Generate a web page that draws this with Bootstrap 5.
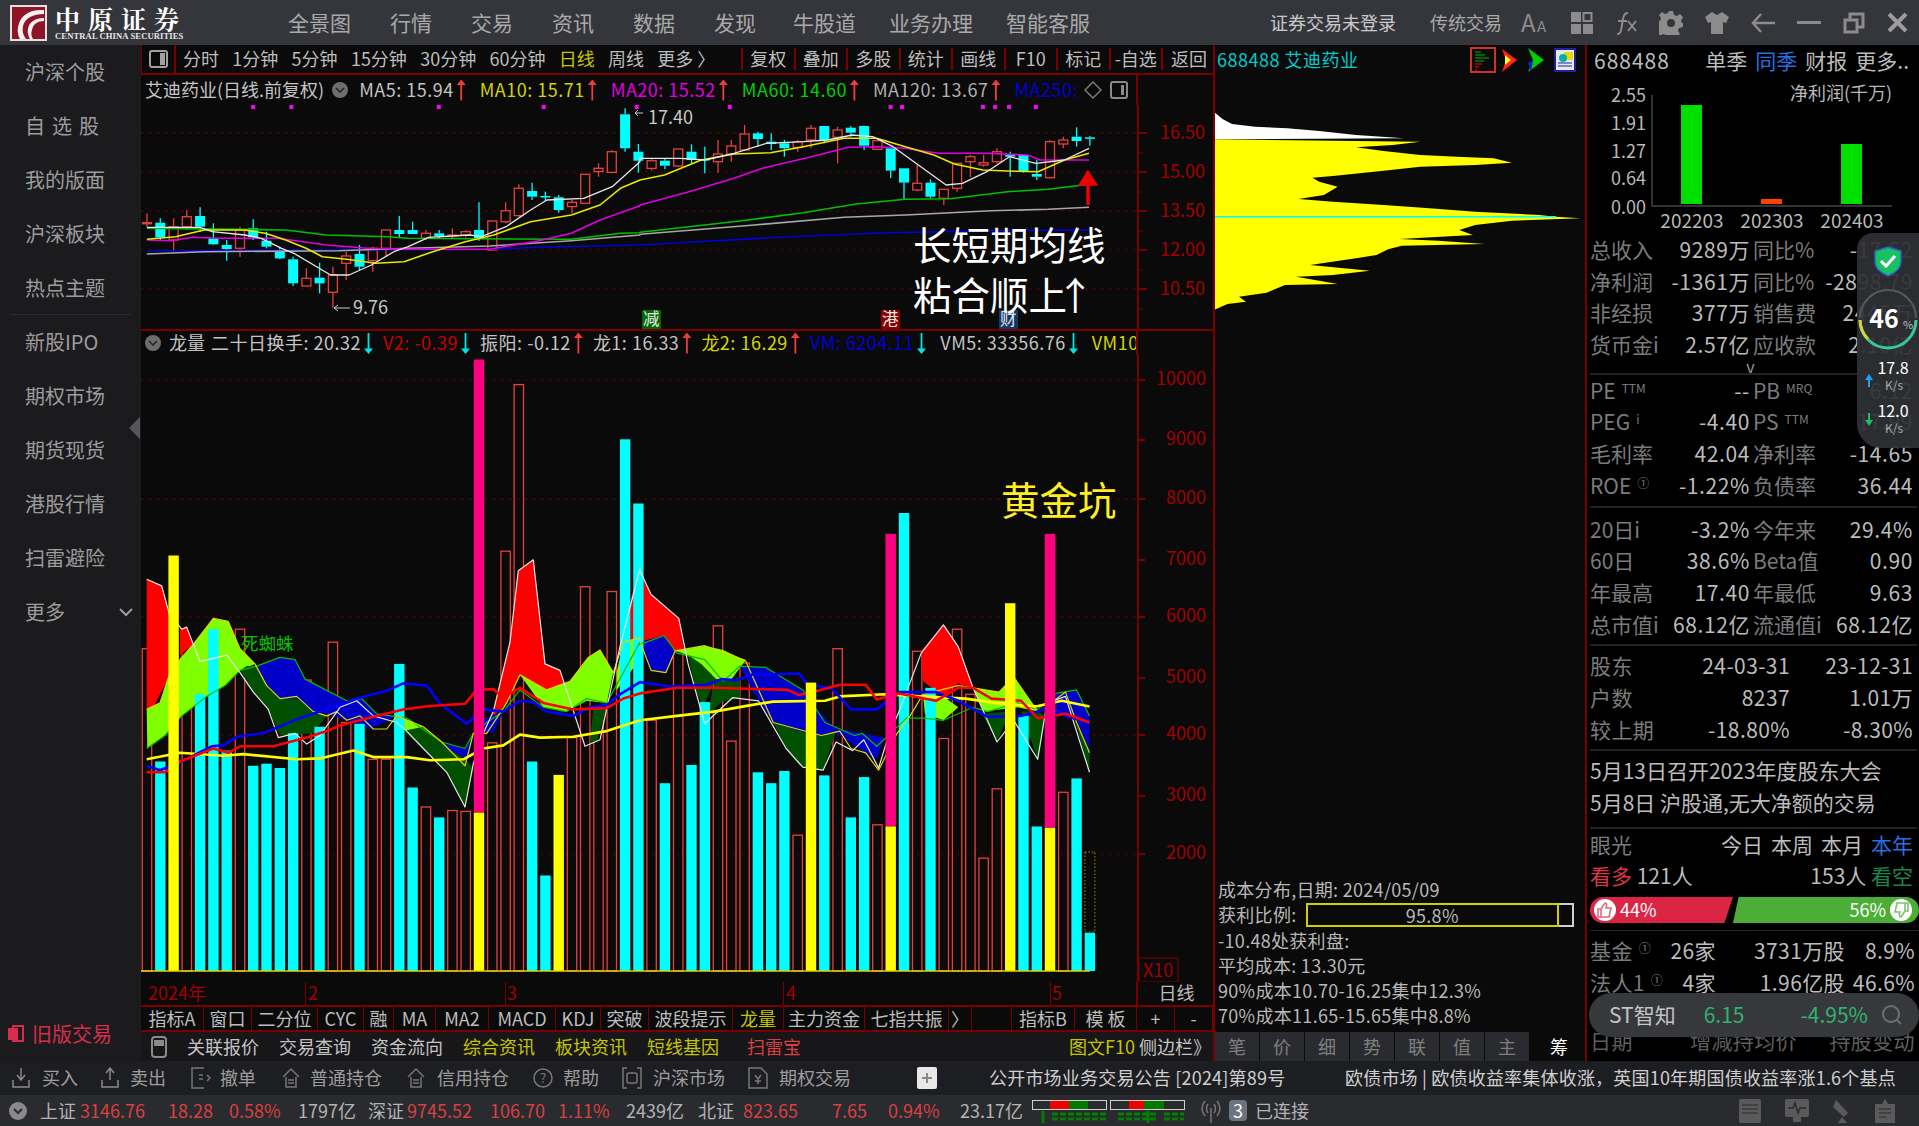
<!DOCTYPE html>
<html lang="zh-CN">
<head>
<meta charset="utf-8">
<title>中原证券</title>
<link href="https://cdn.jsdelivr.net/npm/bootstrap@5.3.0/dist/css/bootstrap.min.css" rel="stylesheet">
<style>
html,body{margin:0;height:100%;background:#000}
body{width:1919px;height:1126px;overflow:hidden;position:relative;font-family:"Noto Sans CJK SC","Liberation Sans",sans-serif;font-size:18px;color:#bdbdbd;line-height:1.2}
svg text{font-family:"Noto Sans CJK SC","Liberation Sans",sans-serif}
.tp-bar{height:45px;background:#35363b;color:#a9a9a9;white-space:nowrap;flex:none}
.tp-logo{width:288px;padding-left:10px}
.logo-cn{font-size:25px;font-weight:700;color:#fff;letter-spacing:8px;line-height:28px;white-space:nowrap;font-family:"Noto Serif CJK SC","Noto Sans CJK SC",serif}
.logo-en{font:700 8.6px/9px "Liberation Serif",serif;color:#e8e8e8;white-space:nowrap;letter-spacing:.1px}
.tp-menu{font-size:21px;gap:39px;flex:none}
.tp-menu2{font-size:21px;gap:33px;margin-left:37px;flex:none}
.tp-right{font-size:18px;gap:34px;padding-right:11px;flex:none}
.tp-icons{gap:22px;margin-left:-15px}
.mid-wrap{height:1016px;flex:none}
.side-col{width:141px;background:#1b1b1e;color:#9c9c9c;font-size:20px;position:relative;flex:none}
.side-it{height:54px;padding-left:25px;display:flex;align-items:center;white-space:nowrap}
.side-sp{letter-spacing:7px}
.side-sep{height:1px;background:#2c2c30;margin:-1px 10px 0}
.side-tri{position:absolute;left:129px;top:372px;width:0;height:0;border-top:11px solid transparent;border-bottom:11px solid transparent;border-right:11px solid #55565a}
.side-old{margin-top:auto;padding:0 0 15px 8px;color:#d92c4c;font-size:20px;white-space:nowrap}
.chart-col{width:1074px;background:#0a0a0a;flex:none}
.ln-b{border-bottom:2px solid #7a0000}
.ln-r{border-right:2px solid #7a0000}
.tool-row{height:30px;color:#bdbdbd}
.tool-ic{width:35px;flex:none;border-right:2px solid #7a0000;border-left:1px solid #7a0000}
.tool-grp{width:565px;flex:none;padding-left:7px;gap:13.300px;white-space:nowrap}
.tool-cell{width:52.500px;flex:none;text-align:center;border-left:2px solid #7a0000;white-space:nowrap}
.tool-cell:last-child{flex:1 1 auto}
.yel{color:#c4c400}
.lg-row{height:30px;flex:none}
.lg-vol{height:25px;border-top:1px solid #7a0000}
.lg-main{width:997px;flex:none;overflow:hidden;white-space:nowrap;padding-left:4px}
.lg-rest{flex:1 1 auto}
.lg-down{width:16px;height:16px;border-radius:50%;background:#6d6d6d;flex:none;display:flex;align-items:center;justify-content:center}
.aup,.adn{display:inline-block;width:9px;height:21px;flex:none;clip-path:polygon(50% 0,100% 26%,60% 26%,60% 100%,40% 100%,40% 26%,0 26%)}
.aup{background:#f03c3c}
.adn{background:#00e5e5;transform:rotate(180deg)}
.lg-it{display:flex;align-items:center;gap:3px;letter-spacing:.5px}
.lg-top{margin-left:14px}
.lg-first{margin-left:11px}
.lg-sec{margin-left:10px}
.lg-name{margin:0 6px 0 8px}
.c-w{color:#c4c4c4}.c-y{color:#d4d400}.c-m{color:#e000e0}.c-g{color:#00d000}.c-gr{color:#b0b0b0}.c-b{color:#0000d8}.c-r{color:#c80000}
.cv{display:block;flex:none}
.dt-row{height:25px;color:#a00000;font-size:18px}
.dt-main{width:997px;flex:none}
.dt-a{width:164px;padding-left:7px;flex:none}
.dt-b{width:200px;padding-left:2px;flex:none;border-left:1px solid #7a0000}
.dt-c{width:278px;padding-left:1px;flex:none;border-left:1px solid #7a0000}
.dt-d{width:267px;padding-left:2px;flex:none;border-left:1px solid #7a0000}
.dt-e{flex:1 1 auto;padding-left:1px;border-left:1px solid #7a0000}
.dt-f{flex:1 1 auto;text-align:center;color:#bdbdbd}
.tab-row{height:25px}
.tab-c{border-right:1px solid #7a0000;text-align:center;flex:none;white-space:nowrap;height:100%;line-height:23px}
.info-row{height:29px;background:#17171a;white-space:nowrap}
.info-l{padding-left:10px;gap:20px}
.chip-col{width:370px;flex:none;background:#0a0a0a;box-shadow:-2px 0 0 #7a0000}
.chip-head{height:30px;color:#00cccc;padding-left:2px;white-space:nowrap;letter-spacing:.5px}
.chip-ics{margin-left:auto;padding-right:9px;gap:5px}
.cost-box{height:157px;padding:2px 0 0 3px;line-height:25.300px;color:#b8b8b8;white-space:nowrap;letter-spacing:.3px}
.cost-bar{width:268px;height:24px;border:2px solid #cfcfcf;display:flex;margin-left:9px}
.cost-fill{width:96%;border:2px solid #d0d000;margin:-2px 0 -2px -2px;text-align:center;line-height:20px;font-size:18px}
.ch-tabs{height:29px;gap:1px;background:#0a0a0a;color:#7f7f7f}
.ch-t{width:44px;background:#2a2b2f;text-align:center;line-height:29px;flex:none}
.ch-on{background:#0a0a0a;color:#fff;margin-left:7px}
.fin-col{flex:1 1 auto;background:#000;border-left:2px solid #7a0000;overflow:hidden;font-size:21px;color:#bcbcbc;padding-left:3px}
.fin-head{height:31px;padding:0 10px 0 4px;white-space:nowrap;gap:8px}
.fin-head .tb-ms{margin-left:auto}
.fin-code{letter-spacing:1px}
.blu{color:#2a6fe0}
.fin-r{height:31.700px;display:flex;gap:3px;line-height:31px;white-space:nowrap;padding-right:6px}
.fin-h{width:160px;display:flex;justify-content:space-between;flex:none}
.fin-h>span:last-child{letter-spacing:.6px}
.lb{color:#7b7b7b}
.sup{font-size:12px;line-height:0;vertical-align:6px;margin-left:6px;color:#7b7b7b}
.fin-g{border-bottom:2px solid #222;margin-right:2px}
.g-a{padding-top:6px}
.fin-v{height:12px;line-height:10px;text-align:center;color:#999;font-size:16px;padding-right:5px;width:326px}
.fin-3{display:grid;height:31.700px;line-height:31px;white-space:nowrap;padding-right:3px;letter-spacing:.4px}
.fin-gap{height:27px}
.g3a{grid-template-columns:80px 120px 123px}
.g3b{grid-template-columns:72px 54px 129px 70px}
.g3c{grid-template-columns:100px 100px 125px}
.g3a>:nth-child(n+2),.g3b>:nth-child(n+2),.g3c>:nth-child(n+2){text-align:right}
.dim{color:#5e5e5e}
.eye-box{padding-top:0}
.bb-wrap{height:26px;margin:5px 0 7px;gap:0}
.bb-red{width:143px;height:26px;background:#dc2444;clip-path:polygon(0 0,100% 0,94% 100%,0 100%);border-radius:13px 0 0 13px;flex:none;color:#fff;font-size:18px;padding-left:4px}
.bb-grn{flex:1 1 auto;height:26px;background:#4cae36;clip-path:polygon(3% 0,100% 0,100% 100%,0 100%);border-radius:0 13px 13px 0;color:#fff;font-size:18px;padding-right:7px}
.bb-ball{width:22px;height:22px;background:#fff;border-radius:50%;flex:none;display:flex;align-items:center;justify-content:center}
.tb-bar{height:34px;background:#1d1e22;color:#9d9d9d;white-space:nowrap;flex:none;display:grid;align-items:center;padding-left:12px;grid-template-columns:30px 59px 29px 61px 29px 62px 28px 97px 30px 96px 30px 59px 31px 95px 31px 138px 72px 356px 1fr}
.tb-news{color:#cfcfcf;letter-spacing:.2px}
.st-bar{height:31px;background:#2a2b2f;white-space:nowrap;color:#b4b4b4;flex:none;display:grid;align-items:center;grid-template-columns:40px 40px 88px 61px 69px 70px 39px 83px 68px 68px 72px 45px 89px 56px 72px 72px 1fr}
.rd{color:#d94040}
.widget{position:absolute;left:1857px;top:233px;width:62px;height:215px;background:rgba(46,48,53,.93);border-radius:16px 0 0 24px;color:#fff;text-align:center;font-size:16px;line-height:18px}
.st-pill{position:absolute;left:1589px;top:993px;width:330px;height:44px;background:#36383c;border-radius:22px;color:#c4c4c4;white-space:nowrap;font-size:21px}
.st-g{color:#2fb36e}
</style>
</head>
<body class="d-flex flex-column">

<div class="tp-bar d-flex align-items-center">
  <div class="tp-logo d-flex align-items-center flex-shrink-0">
    <svg width="37" height="36" viewBox="0 0 37 36"><rect width="37" height="36" fill="#e8e0e0"/><rect x="2" y="2" width="33" height="32" fill="#8e1428"/><path d="M34 5C20 4 10 10 8 22c-1 6 1 10 2 12h6c-3-4-4-8-3-13C15 13 23 9 34 9z" fill="#f4f0f0"/><path d="M34 13c-9 0-15 4-16 11-1 4 1 8 2 10h3c-2-3-2-6-1-9 1-6 6-9 12-9z" fill="#f4f0f0"/></svg>
    <div class="ms-2"><div class="logo-cn">中原证券</div><div class="logo-en">CENTRAL CHINA SECURITIES</div></div>
  </div>
  <div class="tp-menu d-flex"><span>全景图</span><span>行情</span><span>交易</span><span>资讯</span><span>数据</span><span>发现</span></div>
  <div class="tp-menu2 d-flex"><span>牛股道</span><span>业务办理</span><span>智能客服</span></div>
  <div class="tp-right ms-auto d-flex align-items-center">
    <span class="text-light opacity-75">证券交易未登录</span><span>传统交易</span>
    <div class="tp-icons d-flex align-items-center" id="tpIcons">
      <svg width="28" height="22" viewBox="0 0 28 22" fill="#8c8c8c"><text x="0" y="20" font-size="24">A</text><text x="16" y="20" font-size="15">A</text></svg>
      <svg width="22" height="22" viewBox="0 0 22 22" fill="#8c8c8c"><rect width="10" height="10"/><rect x="12.500" y="1" width="8" height="8" fill="none" stroke="#8c8c8c" stroke-width="2"/><rect y="12" width="10" height="10"/><rect x="12" y="12" width="10" height="10"/></svg>
      <svg width="22" height="24" viewBox="0 0 22 24" fill="none" stroke="#8c8c8c" stroke-width="2"><path d="M2 23c4 0 4-3 5-9s1-12 6-12"/><path d="M3 10h9M13 10l8 10M21 10l-8 10"/></svg>
      <svg width="24" height="24" viewBox="0 0 24 24" fill="#8c8c8c"><path d="M10 0h4l1 4 3 1 3-2 3 3-2 4 1 2 1 0v4l-4 1-1 3 2 3-3 3-3-2-2 1-1 3h-4l-1-4-3-1-3 2-3-3 2-3-1-3-2-1v-4l4-1 1-3-2-3 3-3 3 2 3-1z"/><circle cx="12" cy="12" r="4" fill="#35363b"/></svg>
      <svg width="24" height="22" viewBox="0 0 24 22" fill="#8c8c8c"><path d="M7 0l5 3 5-3 7 5-3 6-3-1v12H6V10l-3 1-3-6z"/></svg>
      <svg width="24" height="20" viewBox="0 0 24 20" fill="none" stroke="#8c8c8c" stroke-width="2.500"><path d="M10 1L2 10l8 9M2 10h22"/></svg>
      <svg width="24" height="4" viewBox="0 0 24 4" fill="#8c8c8c"><rect width="24" height="3"/></svg>
      <svg width="22" height="22" viewBox="0 0 22 22" fill="none" stroke="#8c8c8c" stroke-width="3"><rect x="7" y="2" width="13" height="13"/><rect x="2" y="8" width="12" height="12" fill="#35363b"/></svg>
      <svg width="21" height="21" viewBox="0 0 21 21" stroke="#9c9c9c" stroke-width="4"><path d="M2 2l17 17M19 2L2 19"/></svg>
    </div>
  </div>
</div>

<div class="mid-wrap d-flex">
  <aside class="side-col d-flex flex-column">
    <div class="side-it">沪深个股</div><div class="side-it side-sp">自选股</div><div class="side-it">我的版面</div><div class="side-it">沪深板块</div><div class="side-it">热点主题</div>
    <div class="side-sep"></div>
    <div class="side-it">新股IPO</div><div class="side-it">期权市场</div><div class="side-it">期货现货</div><div class="side-it">港股行情</div><div class="side-it">扫雷避险</div>
    <div class="side-it">更多<svg class="ms-auto me-2" width="14" height="9" viewBox="0 0 14 9" fill="none" stroke="#9c9c9c" stroke-width="2"><path d="M1 1l6 6 6-6"/></svg></div>
    <div class="side-tri"></div>
    <div class="side-old d-flex align-items-center gap-2"><svg width="16" height="18" viewBox="0 0 16 18"><rect x="5" y="1" width="10" height="15" fill="none" stroke="#d92c4c" stroke-width="2"/><rect x="0" y="3" width="10" height="12" fill="#d92c4c"/></svg>旧版交易</div>
  </aside>

  <main class="chart-col d-flex flex-column">
    <div class="tool-row ln-b d-flex align-items-center flex-shrink-0">
      <div class="tool-ic h-100 d-flex align-items-center justify-content-center"><svg width="19" height="18" viewBox="0 0 19 18" fill="none" stroke="#a0a0a0" stroke-width="2"><rect x="1" y="1" width="17" height="16" rx="2"/><rect x="11" y="3" width="5" height="12" fill="#a0a0a0" stroke="none"/></svg></div>
      <div class="tool-grp d-flex align-items-center"><span>分时</span><span>1分钟</span><span>5分钟</span><span>15分钟</span><span>30分钟</span><span>60分钟</span><span class="yel">日线</span><span>周线</span><span>更多 〉</span></div>
      <div class="tool-cell">复权</div><div class="tool-cell">叠加</div><div class="tool-cell">多股</div><div class="tool-cell">统计</div><div class="tool-cell">画线</div><div class="tool-cell">F10</div><div class="tool-cell">标记</div><div class="tool-cell">-自选</div><div class="tool-cell">返回</div>
    </div>
    <div class="lg-row d-flex">
      <div class="lg-main ln-r d-flex align-items-center">
        <span class="c-w">艾迪药业(日线.前复权)</span>
        <span class="lg-down ms-2"><svg width="10" height="6" viewBox="0 0 10 6" fill="none" stroke="#222" stroke-width="1.500"><path d="M1 1l4 4 4-4"/></svg></span>
        <span class="lg-it lg-first c-w">MA5: 15.94 <i class="aup"></i></span>
        <span class="lg-it lg-top c-y">MA10: 15.71 <i class="aup"></i></span>
        <span class="lg-it lg-top c-m">MA20: 15.52 <i class="aup"></i></span>
        <span class="lg-it lg-top c-g">MA60: 14.60 <i class="aup"></i></span>
        <span class="lg-it lg-top c-gr">MA120: 13.67 <i class="aup"></i></span>
        <span class="lg-it lg-top c-b">MA250:</span>
        <svg class="ms-auto me-2" width="18" height="18" viewBox="0 0 18 18" fill="none" stroke="#7a7a7a" stroke-width="1.500"><path d="M9 1l8 8-8 8-8-8z"/></svg>
        <svg class="me-2" width="18" height="18" viewBox="0 0 18 18" fill="none" stroke="#8a8a8a" stroke-width="2"><rect x="1" y="1" width="16" height="16" rx="2"/><rect x="11" y="4" width="3" height="10" fill="#8a8a8a" stroke="none"/></svg>
      </div>
      <div class="lg-rest"></div>
    </div>
    <svg id="cvTop" class="cv" width="1074" height="225" viewBox="141 105 1074 225"></svg>
    <div class="lg-row lg-vol d-flex">
      <div class="lg-main ln-r d-flex align-items-center">
        <span class="lg-down"><svg width="10" height="6" viewBox="0 0 10 6" fill="none" stroke="#222" stroke-width="1.500"><path d="M1 1l4 4 4-4"/></svg></span>
        <span class="c-w lg-name">龙量</span>
        <span class="lg-it c-w">二十日换手: 20.32 <i class="adn"></i></span>
        <span class="lg-it lg-sec c-r">V2: -0.39 <i class="adn"></i></span>
        <span class="lg-it lg-sec c-w">振阳: -0.12 <i class="aup"></i></span>
        <span class="lg-it lg-sec c-w">龙1: 16.33 <i class="aup"></i></span>
        <span class="lg-it lg-sec c-y">龙2: 16.29 <i class="aup"></i></span>
        <span class="lg-it lg-sec c-b">VM: 6204.11 <i class="adn"></i></span>
        <span class="lg-it lg-top c-w">VM5: 33356.76 <i class="adn"></i></span>
        <span class="lg-it lg-top c-y">VM10</span>
      </div>
      <div class="lg-rest"></div>
    </div>
    <svg id="cvVol" class="cv" width="1074" height="627" viewBox="141 355 1074 627"></svg>
    <div class="dt-row ln-b d-flex">
      <div class="dt-main ln-r d-flex"><div class="dt-a">2024年</div><div class="dt-b">2</div><div class="dt-c">3</div><div class="dt-d">4</div><div class="dt-e">5</div></div>
      <div class="dt-f">日线</div>
    </div>
    <div class="tab-row ln-b d-flex" id="tabRow"></div>
    <div class="info-row d-flex align-items-center">
      <div class="info-l d-flex align-items-center">
        <svg width="16" height="22" viewBox="0 0 16 22" fill="none" stroke="#8a8a8a" stroke-width="2"><rect x="1" y="1" width="14" height="20" rx="3"/><rect x="3" y="4" width="10" height="6" fill="#8a8a8a" stroke="none"/></svg>
        <span class="c-w">关联报价</span><span class="c-w">交易查询</span><span class="c-w">资金流向</span><span class="yel">综合资讯</span><span class="yel">板块资讯</span><span class="yel">短线基因</span><span class="rd ms-2">扫雷宝</span>
      </div>
      <div class="ms-auto pe-1"><span class="yel">图文F10</span><span class="c-w ms-1">侧边栏》</span></div>
    </div>
  </main>

  <section class="chip-col d-flex flex-column">
    <div class="chip-head d-flex align-items-center">
      <span>688488 艾迪药业</span>
      <div class="chip-ics d-flex align-items-center">
        <svg width="26" height="26" viewBox="0 0 26 26"><rect x="1" y="1" width="24" height="24" fill="none" stroke="#d03030" stroke-width="2"/><path d="M5 5h6M5 8h10M5 11h14M5 14h9" stroke="#008000" stroke-width="1.500"/><path d="M5 17h7M5 20h4M5 23h2" stroke="#c00000" stroke-width="1.500"/></svg>
        <svg width="17" height="26" viewBox="0 0 17 26"><path d="M1 2l15 11L1 25l4-12z" fill="#ff2020"/><path d="M4 8l6 5-6 5z" fill="#ffff00"/></svg>
        <svg class="ms-1" width="18" height="26" viewBox="0 0 18 26"><path d="M1 1l16 12L1 25l5-12z" fill="#00d000"/><path d="M1 16l5-3 -2 12z" fill="#1818e0"/></svg>
        <svg class="ms-1" width="22" height="24" viewBox="0 0 22 24"><rect width="22" height="24" fill="#2020a0"/><rect x="2" y="2" width="18" height="20" fill="#e8e8e8"/><rect x="10" y="4" width="9" height="8" fill="#e8d800"/><circle cx="9" cy="10" r="4" fill="#00b0b0"/><path d="M4 15h14M4 18h14" stroke="#2020a0"/></svg>
      </div>
    </div>
    <svg id="cvChip" class="cv" width="370" height="800" viewBox="1215 75 370 800"></svg>
    <div class="cost-box">
      <div>成本分布,日期: 2024/05/09</div>
      <div class="d-flex align-items-center">获利比例:<div class="cost-bar"><div class="cost-fill">95.8%</div></div></div>
      <div>-10.48处获利盘:</div>
      <div>平均成本: 13.30元</div>
      <div>90%成本10.70-16.25集中12.3%</div>
      <div>70%成本11.65-15.65集中8.8%</div>
    </div>
    <div class="ch-tabs d-flex"><div class="ch-t">笔</div><div class="ch-t">价</div><div class="ch-t">细</div><div class="ch-t">势</div><div class="ch-t">联</div><div class="ch-t">值</div><div class="ch-t">主</div><div class="ch-t ch-on">筹</div></div>
  </section>

  <section class="fin-col">
    <div class="fin-head d-flex align-items-center"><span class="fin-code">688488</span><span class="tb-ms">单季</span><span class="blu">同季</span><span>财报</span><span>更多..</span></div>
    <svg id="cvFin" class="cv" width="332" height="158" viewBox="1590 76 332 158"></svg>
    <div class="fin-r"><div class="fin-h"><span class="lb">总收入</span><span>9289万</span></div><div class="fin-h"><span class="lb">同比%</span><span>-17.52</span></div></div>
    <div class="fin-r"><div class="fin-h"><span class="lb">净利润</span><span>-1361万</span></div><div class="fin-h"><span class="lb">同比%</span><span>-2898.79</span></div></div>
    <div class="fin-r"><div class="fin-h"><span class="lb">非经损</span><span>377万</span></div><div class="fin-h"><span class="lb">销售费</span><span>2445万</span></div></div>
    <div class="fin-r"><div class="fin-h"><span class="lb">货币金i</span><span>2.57亿</span></div><div class="fin-h"><span class="lb">应收款</span><span>2.10亿</span></div></div>
    <div class="fin-g"><div class="fin-v">v</div></div>
    <div class="fin-g pb-1">
      <div class="fin-r"><div class="fin-h"><span class="lb">PE<span class="sup">TTM</span></span><span>--</span></div><div class="fin-h"><span class="lb">PB<span class="sup">MRQ</span></span><span>6.12</span></div></div>
      <div class="fin-r"><div class="fin-h"><span class="lb">PEG<span class="sup">i</span></span><span>-4.40</span></div><div class="fin-h"><span class="lb">PS<span class="sup">TTM</span></span><span>17.99</span></div></div>
      <div class="fin-r"><div class="fin-h"><span class="lb">毛利率</span><span>42.04</span></div><div class="fin-h"><span class="lb">净利率</span><span>-14.65</span></div></div>
      <div class="fin-r"><div class="fin-h"><span class="lb">ROE<span class="sup">①</span></span><span>-1.22%</span></div><div class="fin-h"><span class="lb">负债率</span><span>36.44</span></div></div>
    </div>
    <div class="fin-g g-a pb-1">
      <div class="fin-r"><div class="fin-h"><span class="lb">20日i</span><span>-3.2%</span></div><div class="fin-h"><span class="lb">今年来</span><span>29.4%</span></div></div>
      <div class="fin-r"><div class="fin-h"><span class="lb">60日</span><span>38.6%</span></div><div class="fin-h"><span class="lb">Beta值</span><span>0.90</span></div></div>
      <div class="fin-r"><div class="fin-h"><span class="lb">年最高</span><span>17.40</span></div><div class="fin-h"><span class="lb">年最低</span><span>9.63</span></div></div>
      <div class="fin-r"><div class="fin-h"><span class="lb">总市值i</span><span>68.12亿</span></div><div class="fin-h"><span class="lb">流通值i</span><span>68.12亿</span></div></div>
    </div>
    <div class="fin-g pt-1 pb-1">
      <div class="fin-3 g3a"><span class="lb">股东</span><span>24-03-31</span><span>23-12-31</span></div>
      <div class="fin-3 g3a"><span class="lb">户数</span><span>8237</span><span>1.01万</span></div>
      <div class="fin-3 g3a"><span class="lb">较上期</span><span>-18.80%</span><span>-8.30%</span></div>
    </div>
    <div class="fin-g pt-1 pb-2">
      <div class="fin-r">5月13日召开2023年度股东大会</div>
      <div class="fin-r">5月8日 沪股通,无大净额的交易</div>
    </div>
    <div class="eye-box">
      <div class="fin-r justify-content-between"><span class="lb">眼光</span><span class="d-flex gap-2"><span>今日</span><span>本周</span><span>本月</span><span class="blu">本年</span></span></div>
      <div class="fin-r justify-content-between"><span><span class="text-danger">看多</span> 121人</span><span>153人 <span class="text-success">看空</span></span></div>
      <div class="bb-wrap d-flex">
        <div class="bb-red d-flex align-items-center gap-1"><span class="bb-ball"><svg width="16" height="16" viewBox="0 0 16 16" fill="none" stroke="#e06a7e" stroke-width="1.600"><path d="M1 7h3v8H1zM4 7l4-6c2 0 2 2 1 5h5l-2 9H4"/></svg></span>44%</div>
        <div class="bb-grn d-flex align-items-center justify-content-end gap-1">56%<span class="bb-ball"><svg width="16" height="16" viewBox="0 0 16 16" fill="none" stroke="#7cc06c" stroke-width="1.600"><path d="M15 9h-3V1h3zM12 9l-4 6c-2 0-2-2-1-5H2l2-9h8"/></svg></span></div>
      </div>
    </div>
    <div class="border-top border-dark pt-1">
      <div class="fin-3 g3b"><span class="lb">基金<span class="sup">①</span></span><span>26家</span><span>3731万股</span><span>8.9%</span></div>
      <div class="fin-3 g3b"><span class="lb">法人1<span class="sup">①</span></span><span>4家</span><span>1.96亿股</span><span>46.6%</span></div>
      <div class="fin-gap"></div>
      <div class="fin-3 g3c dim"><span>日期</span><span>增减持均价</span><span>持股变动</span></div>
    </div>
  </section>
</div>

<div class="tb-bar">
  <svg width="18" height="22" viewBox="0 0 18 22" fill="none" stroke="#8a8a8a" stroke-width="1.500"><path d="M9 1v11M5 8l4 5 4-5M1 13v7h16v-7"/></svg><span>买入</span>
  <svg width="18" height="22" viewBox="0 0 18 22" fill="none" stroke="#8a8a8a" stroke-width="1.500"><path d="M9 13V2M5 6l4-5 4 5M1 13v7h16v-7"/></svg><span>卖出</span>
  <svg width="20" height="22" viewBox="0 0 20 22" fill="none" stroke="#777" stroke-width="1.500"><path d="M13 1H1v20h12M8 8h4M8 12h4M16 8l3 3-3 3"/></svg><span>撤单</span>
  <svg width="18" height="22" viewBox="0 0 18 22" fill="none" stroke="#777" stroke-width="1.500"><path d="M1 10l8-8 8 8M4 10v10h10V10M6 13h6M6 16h6"/></svg><span>普通持仓</span>
  <svg width="18" height="22" viewBox="0 0 18 22" fill="none" stroke="#777" stroke-width="1.500"><path d="M1 10l8-8 8 8M4 10v10h10V10M6 13h6M6 16h6"/></svg><span>信用持仓</span>
  <svg width="20" height="22" viewBox="0 0 20 22"><circle cx="10" cy="11" r="9" fill="none" stroke="#777" stroke-width="1.500"/><text x="10" y="16" font-size="13" text-anchor="middle" fill="#777">?</text></svg><span>帮助</span>
  <svg width="20" height="22" viewBox="0 0 20 22" fill="none" stroke="#777" stroke-width="1.500"><path d="M5 1H1v20h4M15 1h4v20h-4"/><rect x="5" y="6" width="10" height="10" rx="2"/></svg><span>沪深市场</span>
  <svg width="20" height="22" viewBox="0 0 20 22" fill="none" stroke="#777" stroke-width="1.500"><path d="M1 1h12l6 6v14H1z"/><path d="M7 8l3 4 3-4M10 12v5M7 14h6"/></svg><span>期权交易</span>
  <svg width="20" height="22" viewBox="0 0 20 22"><rect width="20" height="22" rx="2" fill="#e8e8e8"/><path d="M10 6v10M5 11h10" stroke="#888" stroke-width="2"/></svg>
  <span class="tb-news">公开市场业务交易公告 [2024]第89号</span><span class="tb-news">欧债市场 | 欧债收益率集体收涨，英国10年期国债收益率涨1.6个基点</span>
</div>

<div class="st-bar">
  <svg class="ms-2" width="20" height="20" viewBox="0 0 20 20"><circle cx="10" cy="10" r="9" fill="#8a8a8a"/><path d="M6 8l4 4 4-4" fill="none" stroke="#2a2b2f" stroke-width="2"/></svg>
  <span>上证</span><span class="rd">3146.76</span><span class="rd">18.28</span><span class="rd">0.58%</span><span>1797亿</span>
  <span>深证</span><span class="rd">9745.52</span><span class="rd">106.70</span><span class="rd">1.11%</span><span>2439亿</span>
  <span>北证</span><span class="rd">823.65</span><span class="rd">7.65</span><span class="rd">0.94%</span><span>23.17亿</span>
  <div class="d-flex align-items-center">
    <svg width="153" height="26" viewBox="0 0 153 26"><g fill="none" stroke="#d0d0d0"><rect x=".5" y="2.500" width="74" height="9"/><rect x="78.500" y="2.500" width="74" height="9"/></g><rect x="18" y="3" width="19" height="8" fill="#f00000"/><rect x="37" y="3" width="19" height="8" fill="#007a00"/><rect x="97" y="3" width="15" height="8" fill="#f00000"/><rect x="112" y="3" width="20" height="8" fill="#007a00"/><path d="M20 16h55M20 21h55M86 16h38M86 21h38M132 16h20M132 21h20" stroke="#008000" stroke-width="3" stroke-dasharray="6 2"/><path d="M11 13v12M116 13v12" stroke="#008000" stroke-width="3"/></svg>
    <svg class="ms-3" width="20" height="26" viewBox="0 0 20 26" fill="none" stroke="#777" stroke-width="1.500"><path d="M4 3c-4 5-4 10 0 15M16 3c4 5 4 10 0 15M7 6c-2 3-2 6 0 9M13 6c2 3 2 6 0 9"/><path d="M10 10v15"/></svg>
    <span class="ms-2 px-1 bg-secondary text-white rounded-1">3</span><span class="ms-2">已连接</span>
    <div class="ms-auto d-flex align-items-center gap-4 pe-4">
      <svg width="22" height="24" viewBox="0 0 22 24" fill="#5a5a5a"><rect width="22" height="24" rx="2"/><path d="M3 6h16M3 10h16M3 14h16" stroke="#2a2b2f"/></svg>
      <svg width="24" height="24" viewBox="0 0 24 24" fill="#5a5a5a"><rect width="24" height="18" rx="2"/><rect x="8" y="18" width="8" height="5"/><path d="M3 9h5l2-5 3 10 2-5h6" fill="none" stroke="#2a2b2f" stroke-width="1.500"/></svg>
      <svg width="18" height="24" viewBox="0 0 18 24" fill="#5a5a5a"><path d="M3 1l12 13-4 4L0 8zM9 18l5 6H5z"/></svg>
      <svg width="20" height="24" viewBox="0 0 20 24" fill="#5a5a5a"><path d="M10 0l3 5h7v19H0V5h7z"/><path d="M4 10h12M4 14h12M4 18h8" stroke="#2a2b2f"/></svg>
    </div>
  </div>
</div>

<div class="widget">
  <svg width="62" height="120" viewBox="1857 233 62 120" class="d-block">
    <path d="M1888 247l13 4v11c0 7-6 11-13 14-7-3-13-7-13-14v-11z" fill="#18c060" stroke="#2a60d0" stroke-width="1.500"/><path d="M1881 261l5 5 9-10" fill="none" stroke="#fff" stroke-width="3"/>
    <path d="M1860 318a28 28 0 0 1 56 0" fill="none" stroke="#55585d" stroke-width="2"/>
    <path d="M1860 320a28 28 0 0 0 56 0" fill="none" stroke="#38c89a" stroke-width="3"/>
    <path d="M1860 320a28 28 0 0 0 8 19" fill="none" stroke="#d8d040" stroke-width="3"/>
    <text x="1875" y="328" font-size="25" font-weight="700" fill="#fff" text-anchor="middle" dx="9">46</text><text x="1908" y="329" font-size="11" fill="#bbb" text-anchor="middle">%</text>
  </svg>
  <svg width="62" height="95" viewBox="1857 353 62 95" class="d-block">
    <path d="M1869 374l4 6h-3v7h-2v-7h-3z" fill="#18a0ff"/><text x="1893" y="374" font-size="16" fill="#fff" text-anchor="middle">17.8</text><text x="1894" y="390" font-size="12" fill="#aaa" text-anchor="middle">K/s</text>
    <path d="M1869 426l4-6h-3v-7h-2v7h-3z" fill="#18c060"/><text x="1893" y="417" font-size="16" fill="#fff" text-anchor="middle">12.0</text><text x="1894" y="433" font-size="12" fill="#aaa" text-anchor="middle">K/s</text>
  </svg>
</div>
<div class="st-pill d-flex align-items-center">
  <span class="ms-3 ps-1">ST智知</span><span class="st-g ms-4 ps-1">6.15</span><span class="st-g ms-5 ps-2">-4.95%</span>
  <svg class="ms-auto me-3" width="22" height="22" viewBox="0 0 22 22" fill="none" stroke="#6d6f73" stroke-width="2"><circle cx="10" cy="10" r="8"/><path d="M16 16l4 4"/></svg>
</div>

<script src="https://cdn.jsdelivr.net/npm/bootstrap@5.3.0/dist/js/bootstrap.bundle.min.js"></script>
<script>
const F=n=>+n.toFixed(1);
const cx=i=>147+13.28*i;
const sx5=x=>140+x/3, sx6=x=>640+x/2.703, sy=y=>330+y/2.306;
const sx1=x=>x/2.45, sx2=x=>640+x/2.45, ty=y=>y/3;
const P5=a=>{let o=[];for(let i=0;i<a.length;i+=2)o.push(F(sx5(a[i]))+','+F(sy(a[i+1])));return o};
const P6=a=>{let o=[];for(let i=0;i<a.length;i+=2)o.push(F(sx6(a[i]))+','+F(sy(a[i+1])));return o};
const P1=a=>{let o=[];for(let i=0;i<a.length;i+=2)o.push(F(sx1(a[i]))+','+F(ty(a[i+1])));return o};
const P2=a=>{let o=[];for(let i=0;i<a.length;i+=2)o.push(F(sx2(a[i]))+','+F(ty(a[i+1])));return o};
const line=(p,c,w)=>`<polyline fill="none" stroke="${c}" stroke-width="${w}" stroke-linejoin="round" points="${p.join(' ')}"/>`;
const poly=(p,c)=>`<polygon fill="${c}" points="${p.join(' ')}"/>`;
const RED='#e8403c',CY='#00ffff',AX='#7a0000',LBL='#a30000';

/* ---------- candles ---------- */
const K=[['r',668,670,640,680],['c',668,712,655,720],['r',680,720,655,755],['r',650,680,630,690],['c',648,680,622,695],['c',715,733,670,735],['c',735,747,720,782],['r',690,745,680,770],['c',685,712,658,720],['c',722,740,695,745],['c',755,775,740,778],['c',778,850,770,858],['r',835,858,805,858],['c',833,850,788,880],['r',825,877,800,925],['r',768,790,755,840],['c',762,800,735,810],['r',745,782,740,815],['r',690,745,690,770],['c',690,702,648,712],['c',690,702,665,702],['r',700,715,690,720],['c',700,708,690,715],['r',705,708,685,715],['r',695,705,690,712],['c',690,715,607,722],['r',663,750,663,750],['r',632,665,607,670],['r',565,647,553,650],['c',573,590,548,600],['c',588,591,575,603],['c',592,630,585,638],['r',607,620,600,640],['r',523,610,523,612],['r',505,515,490,530],['r',455,517,450,520],['c',343,445,325,455],['c',455,482,432,518],['r',482,505,478,512],['c',482,497,475,507],['r',447,498,447,500],['c',455,480,433,490],['c',477,480,440,520],['r',462,485,420,518],['r',438,462,420,485],['r',402,450,375,452],['c',400,417,395,440],['c',425,432,400,450],['c',430,445,420,470],['r',425,442,420,455],['r',385,420,375,445],['c',378,420,378,430],['r',390,412,380,490],['c',383,398,378,410],['c',378,437,378,450],['r',422,448,420,450],['c',445,512,440,535],['c',505,548,505,598],['r',550,570,495,572],['c',548,590,538,595],['r',568,595,568,615],['r',490,565,490,575],['r',470,485,465,532],['r',488,495,465,500],['r',455,485,445,490],['c',465,470,455,530],['c',465,515,465,518],['c',522,530,480,540],['r',425,533,420,535],['r',420,432,410,445],['c',410,423,382,440],['c',412,414,408,437]];
let t='';
[16.5,15,13.5,12,10.5].forEach((v,i)=>{const y=133+i*39;t+=`<line x1="141" x2="1138" y1="${y}" y2="${y}" stroke="${AX}" stroke-dasharray="2 6"/><line x1="1138" x2="1147" y1="${y}" y2="${y}" stroke="${AX}" stroke-width="2"/><text x="1160" y="${y+6}" font-size="18" fill="${LBL}">${v.toFixed(2)}</text>`;});
[153,192,231,270,309].forEach(y=>t+=`<line x1="1138" x2="1143" y1="${y}" y2="${y}" stroke="${AX}"/>`);
K.forEach((k,i)=>{const x=F(cx(i)),top=ty(k[1]),bot=ty(k[2]),hi=ty(k[3]),lo=ty(k[4]),c=k[0]=='r'?RED:CY;
 t+=`<line x1="${x}" x2="${x}" y1="${F(hi)}" y2="${F(top)}" stroke="${c}" stroke-width="1.300"/><line x1="${x}" x2="${x}" y1="${F(bot)}" y2="${F(lo)}" stroke="${c}" stroke-width="1.300"/>`;
 t+=k[0]=='r'?`<rect x="${x-4.5}" y="${F(top)}" width="9" height="${F(Math.max(bot-top,1))}" fill="#0a0a0a" stroke="${c}" stroke-width="1.300"/>`:`<rect x="${x-5}" y="${F(top)}" width="10" height="${F(Math.max(bot-top,1.5))}" fill="${c}"/>`;});
t+=line(P1([360,752,1200,748,1320,742,1568,735]).concat(P2([0,735,140,725,340,712,600,698,860,692,1100,690])),'#0000e0',1.6);
t+=line(P1([360,762,500,755,830,752,1000,745,1200,738,1400,722,1568,705]).concat(P2([0,703,130,690,280,675,500,652,650,645,860,632,1000,628,1100,622])),'#a8a8a8',1.6);
t+=line(P1([360,685,700,690,800,705,950,710,1000,715,1250,717,1400,718,1520,700,1568,698]).concat(P2([0,697,120,680,250,662,400,638,530,612,650,598,760,596,900,575,1000,568,1100,553])),'#00c000',1.6);
t+=line(P1([360,720,420,722,470,712,540,715,680,715,800,735,900,745,1000,748,1200,748,1320,722,1400,700,1470,660,1568,617]).concat(P2([0,615,120,575,230,535,300,505,420,470,510,442,580,440,650,445,730,460,850,460,950,465,980,480,1100,480])),'#e000e0',1.6);
t+=line(P1([360,718,430,710,500,690,600,690,650,700,700,720,750,745,790,770,850,778,920,790,990,785,1060,755,1140,725,1210,705,1300,665,1400,645,1470,615,1520,565,1568,540]).concat(P2([0,540,60,525,150,480,230,462,320,458,400,440,500,415,580,415,650,440,720,465,770,492,840,510,900,513,975,515,1040,480,1100,460])),'#e8e800',1.6);
t+=line(P1([360,682,490,682,520,695,600,705,640,715,690,745,720,760,810,825,855,825,910,795,965,755,1000,740,1050,712,1150,705,1180,710,1240,680,1300,630,1340,600,1430,595,1500,560,1568,485]).concat(P2([0,475,100,475,160,480,230,460,310,430,400,425,460,420,520,405,570,410,620,440,750,555,790,550,850,515,905,470,970,490,1040,480,1100,445])),'#e8e8e8',1.3);
[620,714,1075,1332,1560].forEach(x=>t+=`<rect x="${F(sx1(x)-2)}" y="105" width="4" height="4" fill="#ff00ff"/>`);
[220,614,642,840,870,904,970].forEach(x=>t+=`<rect x="${F(sx2(x)-2)}" y="105" width="4" height="4" fill="#ff00ff"/>`);
t+=`<text x="648" y="124" font-size="18" fill="#c8c8c8">17.40</text><path d="M643 113h-8M635 113l3-3M635 113l3 3" stroke="#c8c8c8" fill="none"/>`;
t+=`<text x="353" y="314" font-size="18" fill="#c8c8c8">9.76</text><path d="M350 308h-16M334 308l4-3M334 308l4 3" stroke="#c8c8c8" fill="none"/>`;
t+=`<path d="M1088 205V184M1088 173l-7 11h14z" stroke="#f00000" stroke-width="3.500" fill="#f00000"/>`;
[[642,'减','#006a00'],[881,'港','#8a0000'],[999,'财','#103a66']].forEach(m=>t+=`<rect x="${m[0]}" y="310" width="19" height="19" fill="${m[2]}"/><text x="${m[0]+1}" y="325" font-size="16.500" fill="#e6e6e6">${m[1]}</text>`);
t+=`<text x="913" y="260" font-size="38.500" fill="#fff">长短期均线</text><text x="913" y="310" font-size="38.500" fill="#fff">粘合顺上<tspan dx="-11">↑</tspan></text>`;
t+=`<line x1="1138" x2="1138" y1="105" y2="330" stroke="${AX}" stroke-width="2"/><line x1="141" x2="1215" y1="329.500" y2="329.500" stroke="${AX}" stroke-width="1"/>`;
document.getElementById('cvTop').innerHTML=t;

/* ---------- volume ---------- */
const V=[['r',735],['c',995],['y',520],['r',725],['c',840],['c',690],['c',970],['r',690],['c',1005],['c',1000],['c',1010],['c',930],['r',807],['c',915],['r',720],['r',905],['c',908],['r',990],['r',990],['c',770],['c',1055],['r',1100],['c',1124],['r',1108],['r',1110],['p',68,1113],['r',952],['r',510],['r',126],['c',995],['c',1258],['y',1026],['r',940],['r',592],['r',900],['r',603],['c',252],['c',400],
['r',900],['c',1045],['r',730],['c',1003],['c',858],['r',682],['r',948],['r',768],['c',1020],['c',1045],['c',1017],['r',1165],['y',813],['c',1027],['r',735],['c',1124],['c',1031],['r',1141],['p',470,1145],['c',422],['r',741],['c',825],['r',942],['r',690],['r',840],['r',1218],['r',1058],['y',630],['c',890],['c',1145],['p',470,1148],['r',1066],['c',1034],['c',1390]];
const base=971;
const bar=(i,c,top,bot)=>`<rect x="${F(cx(i)-5.2)}" y="${F(top)}" width="10.4" height="${F(bot-top)}" fill="${c}"/>`;
let v='',hollow='',filled='',cyan='';
[[10000,378],[9000,438],[8000,497],[7000,558],[6000,615],[5000,676],[4000,733],[3000,794],[2000,852]].forEach(a=>{
 if([10000,8000,6000,4000,2000].includes(a[0]))v+=`<line x1="141" x2="1138" y1="${a[1]+2}" y2="${a[1]+2}" stroke="${AX}" stroke-dasharray="2 6"/>`;
 v+=`<line x1="1138" x2="1145" y1="${a[1]+2}" y2="${a[1]+2}" stroke="${AX}" stroke-width="2"/><text x="1206" y="${a[1]+7}" font-size="18" fill="${LBL}" text-anchor="end">${a[0]}</text>`;});
V.forEach((b,i)=>{const top=sy(b[1]);
 if(b[0]=='r')hollow+=`<rect x="${F(cx(i)-4.7)}" y="${F(top)}" width="9.4" height="${F(base-top)}" fill="none" stroke="${RED}" stroke-width="1.300"/>`;
 else if(b[0]=='c')cyan+=bar(i,CY,top,base);
 else if(b[0]=='y')filled+=bar(i,'#ffff00',top,base);
 else filled+=bar(i,'#ff0080',top,sy(b[2]))+bar(i,'#ffff00',sy(b[2]),base);});
const LM='#7fff00',DG='#005000',BL='#0000c8',RR='#ff0000';
let rib='';
[[[20,575,65,590,88,655,88,800,40,870,20,875],RR],[[120,690,140,685,160,725,120,750],RR],
[[20,875,60,860,90,790,125,755,160,725,220,665,265,672,300,735,345,770,300,785,255,820,200,845,125,890,75,935,22,965],LM],
[[320,775,350,775,380,820,420,850,470,845,520,880,560,890,520,930,420,935,385,875,340,835,300,785],DG],
[[350,775,420,755,465,760,495,805,620,855,665,850,710,885,770,890,690,920,620,900,560,885,520,880,470,850,420,850,380,820],BL],
[[770,890,850,915,905,950,800,930],LM],[[790,925,850,965,920,1020,975,1100,1000,1010,975,990,905,950,850,915],DG],
[[905,950,975,965,1000,930,985,990,920,965],BL],
[[1060,875,1110,720,1135,555,1180,530,1215,770,1260,785,1290,870,1220,830,1140,795,1100,860,1060,890],RR],
[[1140,795,1220,830,1290,810,1345,755,1380,738,1420,790,1400,860,1340,855,1280,880,1210,870],LM],
[[1360,870,1400,870,1370,950,1350,955],DG],[[1440,740,1475,610,1500,560,1500,700],RR],[[1430,790,1450,720,1500,710,1500,760,1430,830],LM],[[1020,900,1090,880,1060,930,1030,925],BL]
].forEach(a=>rib+=poly(P5(a[0]),a[1]));
[[[0,560,30,610,105,665,120,745,95,740,65,705,5,718],RR],[[5,718,65,705,95,745,70,790,30,785],BL],
[[98,740,175,728,225,738,285,762,245,808,205,805,165,770,130,750],LM],[[130,750,165,770,205,805,170,870,150,830],DG],[[205,805,245,808,270,800,270,850,225,855,180,890],DG],
[[270,775,340,778,440,830,475,870,510,905,540,920,600,930,660,940,640,990,600,970,530,930,490,935,430,925,360,905,310,840],BL],
[[360,905,430,925,490,935,530,925,495,1015,430,1005,395,965],DG],[[760,740,820,680,860,730,900,825,860,815,820,845,765,810],RR],
[[765,840,820,845,860,870,820,900,770,885],LM],[[900,825,970,835,1010,800,1050,850,1075,880,1020,870,930,880],LM],
[[925,885,1000,880,965,950],DG],[[1030,880,1075,880,1095,890,1075,990],DG],[[1125,840,1180,830,1215,890,1215,970,1180,900,1125,880],BL],[[1175,900,1215,970,1215,1020],DG]
].forEach(a=>rib+=poly(P6(a[0]),a[1]));
v+=hollow+rib+cyan;
v+=line(P5([20,965,75,935,125,890,200,845,255,820,300,785,350,775,420,755,465,760,495,805,620,855,665,850,710,885,800,895,905,950,975,965,1000,930,1040,905,1090,880,1140,830,1210,870,1280,880,1340,850,1400,860,1500,720]).concat(P6([0,725,65,705,100,745,175,760,225,810,270,775,340,778,440,830,500,905,580,935,600,930,640,960,665,940,720,895,765,895,820,900,900,870,940,880,1020,860,1075,875,1125,838,1180,830,1215,890])),'#00c000',1.2);
v+=line(P5([20,875,60,860,90,790,125,755,160,725,220,665,265,672,300,735,345,770,380,820,420,850,470,845,520,880,560,890,590,880,620,900,660,890,700,920,740,920,770,890,850,915,905,950,975,1005,1000,930,1040,930,1100,860,1140,795,1220,830,1290,810,1345,755,1380,738,1420,790,1450,720,1500,710]).concat(P6([0,718,30,785,70,790,95,740,175,728,285,762,360,905,490,935,540,925,570,965,610,975,645,1015,695,930,730,890,765,840,860,820,900,825,970,835,1010,800,1075,880,1095,870,1150,835,1180,905,1215,975])),'#e0d800',1.2);
v+=line(P5([20,575,65,590,88,655,125,690,140,685,180,765,260,750,300,790,340,835,385,875,415,940,465,930,500,955,540,935,600,870,650,855,700,890,770,905,800,925,850,965,920,1020,975,1100,1000,1000,1030,930,1060,880,1110,720,1135,555,1180,530,1215,770,1260,785,1335,960,1380,945,1440,730,1500,550]).concat(P6([0,555,30,610,105,665,130,770,175,908,250,848,320,855,395,965,440,1008,495,1015,530,950,575,970,605,945,645,1010,670,940,700,880,760,745,820,680,860,730,900,825,965,950,1010,900,1075,990,1100,860,1150,845,1215,1020])),'#e8e8e8',1.2);
v+=line(P5([20,990,120,975,250,982,310,978,470,990,540,988,640,970,700,985,800,985,870,992,970,990,1030,965,1090,958,1140,933,1200,940,1300,938,1400,925,1500,900]).concat(P6([0,900,100,890,200,880,300,865,360,857,500,855,540,845,660,840,760,845,880,850,960,860,1070,868,1140,855,1215,868])),'#ffff00',2.6);
v+=line(P5([20,1005,60,1015,125,995,215,960,250,958,290,938,370,930,480,895,580,870,650,850,740,832,790,815,860,820,900,862,980,908,1030,875,1090,880,1140,855,1180,858,1220,880,1300,890,1350,870,1400,865,1440,840,1500,812]).concat(P6([0,812,80,822,180,818,220,805,260,808,300,795,430,792,450,815,520,828,570,875,640,875,700,835,800,835,860,855,940,892,1030,890,1075,880,1100,870,1150,890,1215,905])),'#0000ff',2.6);
v+=line(P5([20,1020,75,1020,120,995,220,965,265,975,300,960,400,960,500,940,560,925,600,912,700,892,790,875,870,867,975,862,1010,830,1060,828,1090,848,1140,825,1210,860,1300,875,1400,872,1450,850,1500,838]).concat(P6([0,838,100,825,200,825,400,830,430,842,480,832,540,818,610,818,640,852,700,838,800,855,860,825,900,825,950,850,1030,855,1075,895,1150,885,1215,905])),'#ff0000',2.6);
v+=filled;
v+=`<rect x="${F(cx(71)-5)}" y="852" width="10" height="80" fill="none" stroke="#a09000" stroke-dasharray="1.500 2"/>`;
v+=`<line x1="141" x2="1090" y1="971" y2="971" stroke="#e0d800" stroke-width="1.500"/>`;
v+=`<text x="241" y="650" font-size="17.500" fill="#00c800">死蜘蛛</text>`;
v+=`<text x="1001" y="515" font-size="38.500" fill="#ffee22">黄金坑</text>`;
v+=`<rect x="1139" y="958" width="39" height="24" fill="none" stroke="${AX}"/><text x="1143" y="977" font-size="18" fill="${LBL}">X10</text>`;
v+=`<line x1="1138" x2="1138" y1="355" y2="982" stroke="${AX}" stroke-width="2"/>`;
document.getElementById('cvVol').innerHTML=v;

/* ---------- tab row ---------- */
const T=[['指标A',63],['窗口',48],['二分位',66],['CYC',46],['融',30],['MA',42],['MA2',53],['MACD',67],['KDJ',45],['突破',48],['波段提示',84],['龙量',51],['主力资金',81],['七指共振',84],['〉',23],['',40],['指标B',63],['模 板',62],['+',38],['-',38]];
document.getElementById('tabRow').innerHTML=T.map(a=>`<div class="tab-c${a[0]=='龙量'?' yel':''}" style="width:${a[1]}px">${a[0]}</div>`).join('');

/* ---------- chip distribution ---------- */
const C3=a=>{let o=[];for(let i=0;i<a.length;i+=2)o.push(F(1200+a[i]/2.18)+','+F(a[i+1]/3));return o};
let c=poly(C3([30,335,50,358,70,372,120,380,190,385,260,393,340,405,445,415,30,418]),'#fff');
c+=poly(C3([30,418,480,425,420,435,340,442,400,453,480,465,560,470,640,475,680,488,600,495,480,500,400,512,290,528,245,533,260,545,300,560,270,585,215,597,290,605,400,615,500,625,600,635,740,645,775,650,830,655,680,662,600,675,565,690,595,705,435,717,520,722,620,732,440,737,410,748,385,765,340,775,240,795,370,812,290,825,210,830,300,852,185,855,145,878,85,890,100,905,60,912,30,930]),'#ffff00');
c+=`<line x1="1214" x2="1556" y1="216.700" y2="216.700" stroke="#00ffff" stroke-width="1.500"/>`;
document.getElementById('cvChip').innerHTML=c;

/* ---------- financial bars ---------- */
let f='';
[[95,'2.55'],[123,'1.91'],[151,'1.27'],[178,'0.64'],[207,'0.00']].forEach(a=>f+=`<text x="1611" y="${a[0]+7}" font-size="18" fill="#b8b8b8">${a[1]}</text>`);
f+=`<path d="M1652 95V206H1892" fill="none" stroke="#444" stroke-width="1.500"/>`;
f+=`<rect x="1681" y="105" width="21" height="99" fill="#00e000"/><rect x="1761" y="199" width="21" height="5" fill="#ff4000"/><rect x="1841" y="144" width="21" height="60" fill="#00e000"/>`;
[[1692,'202203'],[1772,'202303'],[1852,'202403']].forEach(a=>f+=`<text x="${a[0]}" y="228" font-size="19" fill="#b8b8b8" text-anchor="middle">${a[1]}</text>`);
f+=`<text x="1790" y="100" font-size="18" fill="#b8b8b8">净利润(千万)</text>`;
document.getElementById('cvFin').innerHTML=f;
</script>
</body>
</html>
